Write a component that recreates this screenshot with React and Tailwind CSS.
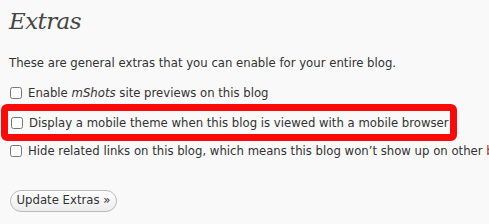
import React from "react";

const options = [
  { id: "mshots", label: <>Enable <em>mShots</em> site previews on this blog</>, gap: "mt-[14px]" },
  {
    id: "mobile",
    label: <>Display a mobile theme when this blog is viewed with a mobile browser</>,
    highlight: true,
    gap: "mt-[3px]",
  },
  {
    id: "related",
    label: (
      <>
        Hide related links on this blog, which means this blog won’t show up on other{" "}
        <a href="#" className="text-[#a0301f]">blogs’ related links</a>
      </>
    ),
    gap: "mt-[2px]",
  },
];

export default function App() {
  return (
    <div className="w-[489px] h-[224px] overflow-hidden bg-[#f9f9f9] text-[#333] font-['DejaVu_Sans',sans-serif] text-[11.7px]">
      <h2 className="pl-[9px] pt-[6px] font-['DejaVu_Serif',serif] italic text-[23px] tracking-[-0.6px] leading-[30px] text-[#464646]">
        Extras
      </h2>

      <p className="pl-[9px] mt-[19px] leading-[16px] whitespace-nowrap">
        These are general extras that you can enable for your entire blog.
      </p>

      <div className="flex flex-col">
        {options.map((opt) => (
          <div
            key={opt.id}
            className={
              opt.highlight
                ? `${opt.gap} ml-[1px] w-[456px] h-[37px] border-[7px] border-[#fb0a0a] rounded-[6px] flex items-center pl-[3px] whitespace-nowrap`
                : `${opt.gap} h-[16px] flex items-center pl-[10px] whitespace-nowrap`
            }
          >
            <input type="checkbox" className="w-[12px] h-[12px] mr-[6px] shrink-0" />
            <span className="leading-[16px]">{opt.label}</span>
          </div>
        ))}
      </div>

      <div className="pl-[10px] mt-[31px]">
        <button className="h-[22px] w-[107px] rounded-full border border-[#bbb] bg-gradient-to-b from-white to-[#ececec] text-[11.7px] text-[#333] whitespace-nowrap">
          Update Extras »
        </button>
      </div>
    </div>
  );
}
